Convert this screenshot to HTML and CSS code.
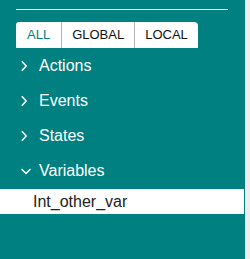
FILE: index.html
```html
<!DOCTYPE html>
<html>
<head>
<meta charset="utf-8">
<link rel="stylesheet" href="styles.css">
</head>
<body>
<div class="panel">
  <div class="head">
    <div class="rule"></div>
    <div class="tabs">
      <div class="tab active">ALL</div>
      <div class="tab">GLOBAL</div>
      <div class="tab">LOCAL</div>
    </div>
  </div>
  <ul class="tree">
    <li class="node">
      <svg class="chev" viewBox="0 0 18 12" width="18" height="12"><path d="M0.8 1.2 L5.2 6 L0.8 10.8" /></svg>
      <span>Actions</span>
    </li>
    <li class="node">
      <svg class="chev" viewBox="0 0 18 12" width="18" height="12"><path d="M0.8 1.2 L5.2 6 L0.8 10.8" /></svg>
      <span>Events</span>
    </li>
    <li class="node">
      <svg class="chev" viewBox="0 0 18 12" width="18" height="12"><path d="M0.8 1.2 L5.2 6 L0.8 10.8" /></svg>
      <span>States</span>
    </li>
    <li class="node">
      <svg class="chev" viewBox="0 0 18 12" width="18" height="12"><path d="M0.5 4 L5 8.5 L9.5 4" /></svg>
      <span>Variables</span>
    </li>
  </ul>
  <div class="leaf">Int_other_var</div>
</div>
</body>
</html>
```

FILE: styles.css
```css
html, body {
  margin: 0;
  padding: 0;
  height: 100%;
}
body {
  background: #eeeeee;
  font-family: "Liberation Sans", Arial, sans-serif;
}
.panel {
  width: 245px;
  height: 100%;
  background: #008080;
  padding-top: 9px;
  box-sizing: border-box;
}
.head {
  padding: 0 17px 0 16px;
}
.rule {
  height: 1px;
  background: #ffffff;
  margin-bottom: 12px;
}
.tabs {
  display: flex;
}
.tab {
  background: #ffffff;
  color: #111111;
  font-size: 13px;
  line-height: 16px;
  padding: 5px 10px;
  border-right: 1px solid #b5b5b5;
}
.tab:first-child {
  border-top-left-radius: 3px;
  padding: 5px 11px;
}
.tab:last-child {
  border-right: none;
  border-top-right-radius: 4px;
}
.tab.active {
  color: #008080;
}
.tree {
  list-style: none;
  margin: 0;
  padding: 0;
}
.node {
  height: 35px;
  display: flex;
  align-items: center;
  padding-left: 21px;
  color: #ffffff;
  font-size: 16px;
}
.chev {
  display: block;
  flex: none;
}
.chev path {
  fill: none;
  stroke: #ffffff;
  stroke-width: 1.5;
}
.leaf {
  margin: 1px 1px 0 0;
  height: 25px;
  line-height: 25px;
  background: #ffffff;
  color: #222222;
  font-size: 16px;
  padding-left: 33px;
}
```
